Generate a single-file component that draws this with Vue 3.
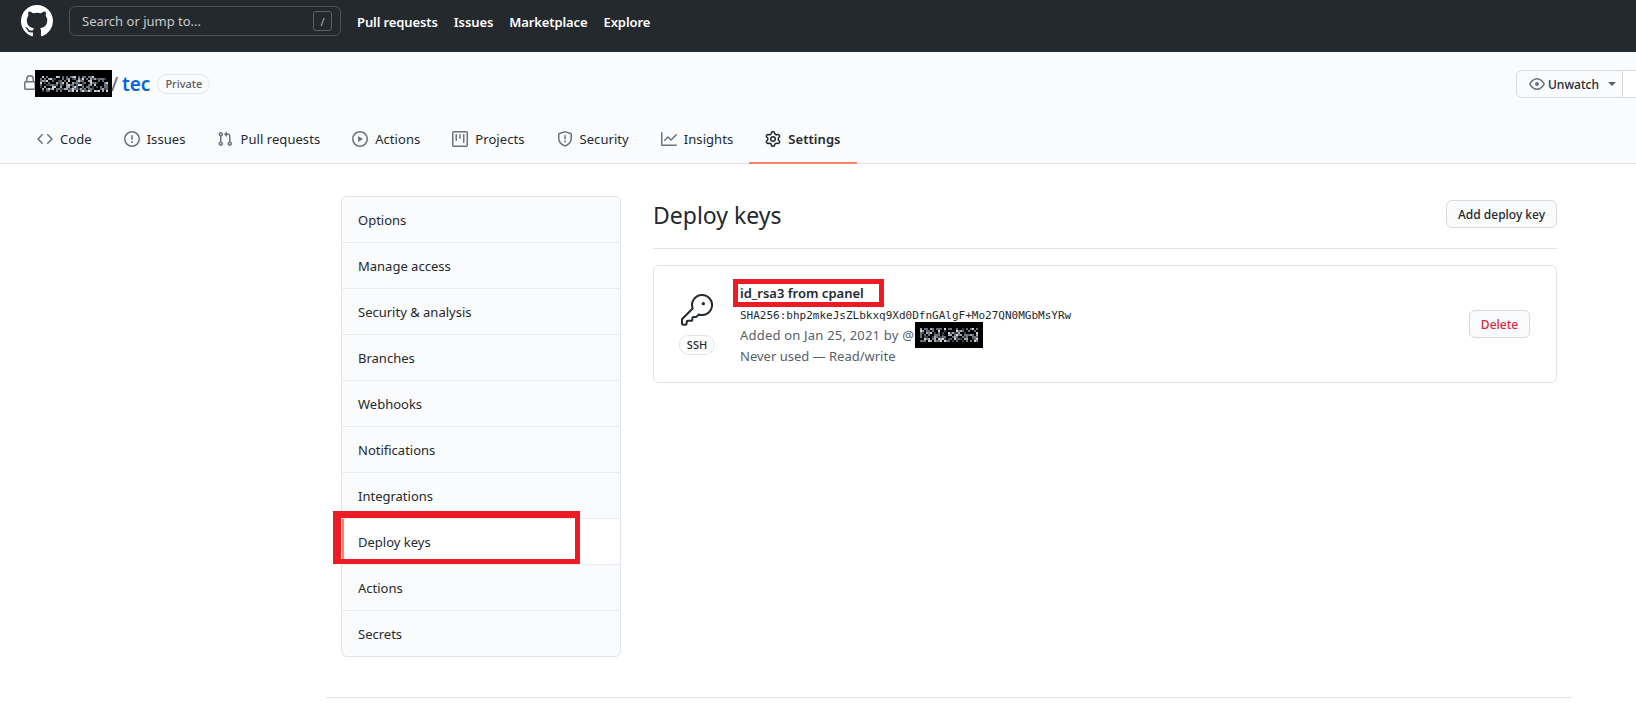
<template>
  <div class="page">
    <header class="topbar">
      <svg class="logo" viewBox="0 0 16 16" width="32" height="32"><path fill="#fff" :d="icons.mark" /></svg>
      <div class="search">
        <span>Search or jump to...</span>
        <kbd>/</kbd>
      </div>
      <nav class="topnav">
        <a v-for="link in topLinks" :key="link">{{ link }}</a>
      </nav>
    </header>

    <section class="repohead">
      <div class="repotitle">
        <svg class="lock" viewBox="0 0 16 16" width="16" height="16"><path fill-rule="evenodd" :d="icons.lock" /></svg>
        <span class="owner"></span>
        <span class="slash">/</span>
        <a class="reponame">tec</a>
        <span class="label">Private</span>
        <div class="watch">
          <button class="watch-btn">
            <svg viewBox="0 0 16 16" width="16" height="16"><path fill-rule="evenodd" :d="icons.eye" /></svg>
            Unwatch
            <i class="caret"></i>
          </button>
          <button class="watch-next"></button>
        </div>
      </div>
      <nav class="tabs">
        <a v-for="tab in tabs" :key="tab.name" class="tab" :class="{ selected: tab.name === 'Settings' }">
          <svg viewBox="0 0 16 16" width="16" height="16"><path fill-rule="evenodd" :d="tab.icon" /></svg>
          {{ tab.name }}
        </a>
      </nav>
    </section>

    <div class="content">
      <aside class="menu">
        <a v-for="item in menu" :key="item" class="menu-item" :class="{ current: item === 'Deploy keys' }">{{ item }}</a>
      </aside>
      <main class="main">
        <div class="subhead">
          <h2>Deploy keys</h2>
          <button class="btn">Add deploy key</button>
        </div>
        <div class="keybox">
          <div class="keyicon">
            <svg viewBox="0 0 24 24" width="32" height="32" fill="none" stroke="#24292e" stroke-width="1.5" stroke-linejoin="round">
              <path d="M15.75.75a7.5 7.5 0 1 1-2.4 14.6l-1.6 1.6a1 1 0 0 1-.7.3H9.5a1 1 0 0 0-1 1v1.2a.7.7 0 0 1-.7.7H5.25a1 1 0 0 0-1 1v1a1 1 0 0 1-1 1H1.75a1 1 0 0 1-1-1v-2.9a1 1 0 0 1 .3-.7l7.7-7.7A7.5 7.5 0 0 1 15.75.75z" />
              <circle cx="16.75" cy="7.25" r="1.25" fill="#24292e" stroke="none" />
            </svg>
            <span class="label ssh">SSH</span>
          </div>
          <div class="keyinfo">
            <strong>id_rsa3 from cpanel</strong>
            <code>SHA256:bhp2mkeJsZLbkxq9Xd0DfnGAlgF+Mo27QN0MGbMsYRw</code>
            <span class="added">Added on Jan 25, 2021 by @</span>
            <span>Never used — Read/write</span>
          </div>
          <button class="btn danger">Delete</button>
        </div>
      </main>
    </div>
    <div class="footer-line"></div>

    <!-- blacked out usernames and the red marks drawn over the screenshot -->
    <svg v-for="box in redactions" :key="box.cls" class="redact" :class="box.cls" :viewBox="`0 0 ${box.w} ${box.h}`">
      <rect :width="box.w" :height="box.h" fill="#000" />
      <g class="speckle">
        <rect v-for="(n, i) in noise(box)" :key="i" :x="n.x" :y="n.y" width="2" height="2" :fill="n.c" />
      </g>
    </svg>
    <div class="mark mark-menu"></div>
    <div class="mark mark-key"></div>
  </div>
</template>

<script setup>
const icons = {
  mark: 'M8 0C3.58 0 0 3.58 0 8c0 3.54 2.29 6.53 5.47 7.59.4.07.55-.17.55-.38 0-.19-.01-.82-.01-1.49-2.01.37-2.53-.49-2.69-.94-.09-.23-.48-.94-.82-1.13-.28-.15-.68-.52-.01-.53.63-.01 1.08.58 1.23.82.72 1.21 1.87.87 2.33.66.07-.52.28-.87.51-1.07-1.78-.2-3.64-.89-3.64-3.95 0-.87.31-1.59.82-2.15-.08-.2-.36-1.02.08-2.12 0 0 .67-.21 2.2.82.64-.18 1.32-.27 2-.27.68 0 1.36.09 2 .27 1.53-1.04 2.2-.82 2.2-.82.44 1.1.16 1.92.08 2.12.51.56.82 1.27.82 2.15 0 3.07-1.87 3.75-3.65 3.95.29.25.54.73.54 1.48 0 1.07-.01 1.93-.01 2.2 0 .21.15.46.55.38A8.013 8.013 0 0016 8c0-4.42-3.58-8-8-8z',
  lock: 'M4 4v2h-.25A1.75 1.75 0 002 7.75v5.5c0 .966.784 1.75 1.75 1.75h8.5A1.75 1.75 0 0014 13.25v-5.5A1.75 1.75 0 0012.25 6H12V4a4 4 0 10-8 0zm6.5 2V4a2.5 2.5 0 00-5 0v2h5zM12 7.5h.25a.25.25 0 01.25.25v5.5a.25.25 0 01-.25.25h-8.5a.25.25 0 01-.25-.25v-5.5a.25.25 0 01.25-.25H12z',
  eye: 'M1.679 7.932c.412-.621 1.242-1.75 2.366-2.717C5.175 4.242 6.527 3.5 8 3.5c1.473 0 2.824.742 3.955 1.715 1.124.967 1.954 2.096 2.366 2.717a.119.119 0 010 .136c-.412.621-1.242 1.75-2.366 2.717C10.825 11.758 9.473 12.5 8 12.5c-1.473 0-2.824-.742-3.955-1.715C2.92 9.818 2.09 8.69 1.679 8.068a.119.119 0 010-.136zM8 2c-1.981 0-3.67.992-4.933 2.078C1.797 5.169.88 6.423.43 7.1a1.619 1.619 0 000 1.798c.45.678 1.367 1.932 2.637 3.024C4.329 13.008 6.019 14 8 14c1.981 0 3.67-.992 4.933-2.078 1.27-1.091 2.187-2.345 2.637-3.023a1.619 1.619 0 000-1.798c-.45-.678-1.367-1.932-2.637-3.023C11.671 2.992 9.981 2 8 2zm0 8a2 2 0 100-4 2 2 0 000 4z'
}

const topLinks = ['Pull requests', 'Issues', 'Marketplace', 'Explore']

const tabs = [
  { name: 'Code', icon: 'M4.72 3.22a.75.75 0 011.06 1.06L2.06 8l3.72 3.72a.75.75 0 11-1.06 1.06L.47 8.53a.75.75 0 010-1.06l4.25-4.25zm6.56 0a.75.75 0 10-1.06 1.06L13.94 8l-3.72 3.72a.75.75 0 101.06 1.06l4.25-4.25a.75.75 0 000-1.06l-4.25-4.25z' },
  { name: 'Issues', icon: 'M8 1.5a6.5 6.5 0 100 13 6.5 6.5 0 000-13zM0 8a8 8 0 1116 0A8 8 0 010 8zm9 3a1 1 0 11-2 0 1 1 0 012 0zm-.25-6.25a.75.75 0 00-1.5 0v3.5a.75.75 0 001.5 0v-3.5z' },
  { name: 'Pull requests', icon: 'M7.177 3.073L9.573.677A.25.25 0 0110 .854v4.792a.25.25 0 01-.427.177L7.177 3.427a.25.25 0 010-.354zM3.75 2.5a.75.75 0 100 1.5.75.75 0 000-1.5zm-2.25.75a2.25 2.25 0 113 2.122v5.256a2.251 2.251 0 11-1.5 0V5.372A2.25 2.25 0 011.5 3.25zM11 2.5h-1V4h1a1 1 0 011 1v5.628a2.251 2.251 0 101.5 0V5A2.5 2.5 0 0011 2.5zm1 10.25a.75.75 0 111.5 0 .75.75 0 01-1.5 0zM3.75 12a.75.75 0 100 1.5.75.75 0 000-1.5z' },
  { name: 'Actions', icon: 'M1.5 8a6.5 6.5 0 1113 0 6.5 6.5 0 01-13 0zM8 0a8 8 0 100 16A8 8 0 008 0zM6.379 5.227A.25.25 0 006 5.442v5.117a.25.25 0 00.379.214l4.264-2.559a.25.25 0 000-.428L6.379 5.227z' },
  { name: 'Projects', icon: 'M1.75 0A1.75 1.75 0 000 1.75v12.5C0 15.216.784 16 1.75 16h12.5A1.75 1.75 0 0016 14.25V1.75A1.75 1.75 0 0014.25 0H1.75zM1.5 1.75a.25.25 0 01.25-.25h12.5a.25.25 0 01.25.25v12.5a.25.25 0 01-.25.25H1.75a.25.25 0 01-.25-.25V1.75zM11.75 3a.75.75 0 00-.75.75v7.5a.75.75 0 001.5 0v-7.5a.75.75 0 00-.75-.75zm-8.25.75a.75.75 0 011.5 0v5.5a.75.75 0 01-1.5 0v-5.5zM8 3a.75.75 0 00-.75.75v3.5a.75.75 0 001.5 0v-3.5A.75.75 0 008 3z' },
  { name: 'Security', icon: 'M7.467.133a1.75 1.75 0 011.066 0l5.25 1.68A1.75 1.75 0 0115 3.48V7c0 1.566-.32 3.182-1.303 4.682-.983 1.498-2.585 2.813-5.032 3.855a1.7 1.7 0 01-1.33 0c-2.447-1.042-4.049-2.357-5.032-3.855C1.32 10.182 1 8.566 1 7V3.48a1.75 1.75 0 011.217-1.667l5.25-1.68zm.61 1.429a.25.25 0 00-.153 0l-5.25 1.68a.25.25 0 00-.174.238V7c0 1.358.275 2.666 1.057 3.86.784 1.194 2.121 2.34 4.366 3.297a.2.2 0 00.154 0c2.245-.956 3.582-2.104 4.366-3.298C13.225 9.666 13.5 8.36 13.5 7V3.48a.25.25 0 00-.174-.237l-5.25-1.68zM9 10.5a1 1 0 11-2 0 1 1 0 012 0zm-.25-5.75a.75.75 0 10-1.5 0v3a.75.75 0 001.5 0v-3z' },
  { name: 'Insights', icon: 'M1.5 1.75a.75.75 0 00-1.5 0v12.5c0 .414.336.75.75.75h14.5a.75.75 0 000-1.5H1.5V1.75zm14.28 2.53a.75.75 0 00-1.06-1.06L10 7.94 7.53 5.47a.75.75 0 00-1.06 0L3.22 8.72a.75.75 0 001.06 1.06L7 7.06l2.47 2.47a.75.75 0 001.06 0l5.25-5.25z' },
  { name: 'Settings', icon: 'M7.429 1.525a6.593 6.593 0 011.142 0c.036.003.108.036.137.146l.289 1.105c.147.56.55.967.997 1.189.174.086.341.183.501.29.417.278.97.423 1.53.27l1.102-.303c.11-.03.175.016.195.046.219.31.41.641.573.989.014.031.022.11-.059.19l-.815.806c-.411.406-.562.957-.53 1.456a4.588 4.588 0 010 .582c-.032.499.119 1.05.53 1.456l.815.806c.08.08.073.159.059.19a6.494 6.494 0 01-.573.99c-.02.029-.086.074-.195.045l-1.103-.303c-.559-.153-1.112-.008-1.529.27-.16.107-.327.204-.5.29-.449.222-.851.628-.998 1.189l-.289 1.105c-.029.11-.101.143-.137.146a6.613 6.613 0 01-1.142 0c-.036-.003-.108-.037-.137-.146l-.289-1.105c-.147-.56-.55-.967-.997-1.189a4.502 4.502 0 01-.501-.29c-.417-.278-.97-.423-1.53-.27l-1.102.303c-.11.03-.175-.016-.195-.046a6.492 6.492 0 01-.573-.989c-.014-.031-.022-.11.059-.19l.815-.806c.411-.406.562-.957.53-1.456a4.587 4.587 0 010-.582c.032-.499-.119-1.05-.53-1.456l-.815-.806c-.08-.08-.073-.159-.059-.19a6.44 6.44 0 01.573-.99c.02-.029.086-.075.195-.045l1.103.303c.559.153 1.112.008 1.529-.27.16-.107.327-.204.5-.29.449-.222.851-.628.998-1.189l.289-1.105c.029-.11.101-.143.137-.146zM8 0c-.236 0-.47.01-.701.03-.743.065-1.29.615-1.458 1.261l-.29 1.106c-.017.066-.078.158-.211.224a5.994 5.994 0 00-.668.386c-.123.082-.233.09-.3.071L3.27 2.776c-.644-.177-1.392.02-1.82.63a7.977 7.977 0 00-.704 1.217c-.315.675-.111 1.422.363 1.891l.815.806c.05.048.098.147.088.294a6.084 6.084 0 000 .772c.01.147-.038.246-.088.294l-.815.806c-.474.469-.678 1.216-.363 1.891.2.428.436.835.704 1.218.428.609 1.176.806 1.82.63l1.103-.303c.066-.019.176-.011.299.071.213.143.436.272.668.386.133.066.194.158.212.224l.289 1.106c.169.646.715 1.196 1.458 1.26a8.094 8.094 0 001.402 0c.743-.064 1.29-.614 1.458-1.26l.29-1.106c.017-.066.078-.158.211-.224a5.98 5.98 0 00.668-.386c.123-.082.233-.09.3-.071l1.102.302c.644.177 1.392-.02 1.82-.63.268-.382.505-.789.704-1.217.315-.675.111-1.422-.364-1.891l-.814-.806c-.05-.048-.098-.147-.088-.294a6.1 6.1 0 000-.772c-.01-.147.039-.246.088-.294l.814-.806c.475-.469.679-1.216.364-1.891a7.992 7.992 0 00-.704-1.218c-.428-.609-1.176-.806-1.82-.63l-1.103.303c-.066.019-.176.011-.299-.071a5.991 5.991 0 00-.668-.386c-.133-.066-.194-.158-.212-.224L10.16 1.29C9.99.645 9.444.095 8.701.031A8.094 8.094 0 008 0zm1.5 8a1.5 1.5 0 11-3 0 1.5 1.5 0 013 0zM11 8a3 3 0 11-6 0 3 3 0 016 0z' }
]

const menu = ['Options', 'Manage access', 'Security & analysis', 'Branches', 'Webhooks', 'Notifications', 'Integrations', 'Deploy keys', 'Actions', 'Secrets']

const redactions = [
  { cls: 'redact-owner', w: 77, h: 27, seed: 7 },
  { cls: 'redact-user', w: 68, h: 26, seed: 23 }
]

// speckle that imitates the scrambled username inside the black box
function noise(box) {
  const dots = []
  let s = box.seed
  const colors = ['#6f747b', '#a4a8ad', '#3d4148', '#d0d3d6', '#56677f']
  for (let y = 6; y < box.h - 6; y += 2) {
    for (let x = 5; x < box.w - 5; x += 2) {
      s = (s * 16807) % 2147483647
      if (s % 10 < 6) dots.push({ x, y, c: colors[s % 5] })
    }
  }
  return dots
}
</script>

<style>
html, body {
  margin: 0;
  background: #fff;
  overflow: hidden;
}
</style>

<style scoped>
.page {
  position: relative;
  width: 1636px;
  height: 703px;
  overflow: hidden;
  font-family: "Noto Sans", "Open Sans", sans-serif;
  font-size: 13px;
  color: #24292e;
}
.topbar {
  height: 52px;
  box-sizing: border-box;
  background: #24292e;
  display: flex;
  align-items: flex-start;
  padding: 5px 0 0 21px;
}
.logo {
  display: block;
  margin-right: 16px;
}
.search {
  width: 272px;
  height: 30px;
  margin-top: 1px;
  box-sizing: border-box;
  border: 1px solid #4b5157;
  border-radius: 6px;
  display: flex;
  align-items: center;
  justify-content: space-between;
  padding: 0 8px 0 12px;
  color: #c8cacc;
}
.search kbd {
  width: 19px;
  height: 20px;
  box-sizing: border-box;
  border: 1px solid #5c6166;
  border-radius: 3px;
  font: 11px "Noto Sans", sans-serif;
  color: #b0b3b5;
  display: flex;
  align-items: center;
  justify-content: center;
}
.topnav {
  display: flex;
  gap: 16px;
  margin-left: 16px;
  height: 34px;
  align-items: center;
  letter-spacing: -0.1px;
}
.topnav a {
  color: #fff;
  font-weight: 600;
}
.repohead {
  height: 112px;
  box-sizing: border-box;
  background: #fafbfc;
  border-bottom: 1px solid #e1e4e8;
  padding-top: 18px;
}
.repotitle {
  display: flex;
  align-items: center;
  height: 28px;
  padding-left: 22px;
}
.lock {
  fill: #6a737d;
  margin-bottom: 2px;
}
.owner {
  width: 73px;
}
.slash {
  color: #586069;
  font-size: 19px;
  width: 11px;
}
.reponame {
  color: #0366d6;
  font-size: 19px;
  font-weight: 600;
}
.label {
  border: 1px solid #e1e4e8;
  border-radius: 2em;
  font-size: 11px;
  font-weight: 500;
  line-height: 18px;
  padding: 0 7px;
  color: #586069;
}
.repotitle .label {
  margin-left: 7px;
}
.watch {
  margin-left: auto;
  display: flex;
  height: 28px;
}
.watch-btn {
  width: 107px;
  box-sizing: border-box;
  border: 1px solid #d8dadc;
  border-radius: 6px 0 0 6px;
  background: #fafbfc;
  font: 500 12px "Noto Sans", sans-serif;
  color: #24292e;
  display: flex;
  align-items: center;
  gap: 3px;
  padding: 0 0 0 12px;
}
.watch-btn svg {
  fill: #6a737d;
}
.caret {
  border: 4px solid transparent;
  border-top-color: #586069;
  border-bottom: 0;
  margin-left: 6px;
}
.watch-next {
  width: 13px;
  box-sizing: border-box;
  border: 1px solid #d8dadc;
  border-left: 0;
  border-right: 0;
  background: #fff;
}
.tabs {
  display: flex;
  margin-top: 17px;
  padding-left: 21px;
  letter-spacing: 0.06px;
}
.tab {
  display: flex;
  align-items: center;
  gap: 7px;
  height: 49px;
  box-sizing: border-box;
  padding: 0 16px;
  color: #24292e;
  border-bottom: 2px solid transparent;
}
.tab svg {
  fill: #6a737d;
}
.tab.selected {
  font-weight: 600;
  border-bottom-color: #f9826c;
}
.tab.selected svg {
  fill: #24292e;
}
.content {
  display: flex;
  gap: 32px;
  padding: 32px 0 0 341px;
}
.menu {
  width: 280px;
  box-sizing: border-box;
  background: #fafbfc;
  border: 1px solid #e1e4e8;
  border-radius: 6px;
  display: flex;
  flex-direction: column;
  overflow: hidden;
}
.menu-item {
  height: 46px;
  box-sizing: border-box;
  display: flex;
  align-items: center;
  padding-left: 16px;
  border-bottom: 1px solid #eaecef;
}
.menu-item:last-child {
  height: 45px;
  border-bottom: 0;
}
.menu-item.current {
  background: #fff;
  box-shadow: inset 2px 0 0 #f9826c;
}
.main {
  width: 904px;
}
.subhead {
  display: flex;
  justify-content: space-between;
  align-items: flex-start;
  height: 48px;
  padding-top: 4px;
  border-bottom: 1px solid #e1e4e8;
  margin-bottom: 16px;
}
h2 {
  margin: -1px 0 0;
  font-size: 23px;
  font-weight: 400;
  line-height: 32px;
}
.btn {
  height: 28px;
  width: 111px;
  box-sizing: border-box;
  border: 1px solid #d8dadc;
  border-radius: 6px;
  background: #fafbfc;
  font: 500 12px "Noto Sans", sans-serif;
  color: #24292e;
  padding: 0;
}
.btn.danger {
  width: 61px;
  color: #d4293f;
}
.keybox {
  height: 118px;
  box-sizing: border-box;
  border: 1px solid #e1e4e8;
  border-radius: 6px;
  display: flex;
  align-items: center;
  padding: 0 26px 0 24px;
}
.keyicon {
  width: 38px;
  margin-right: 24px;
  display: flex;
  flex-direction: column;
  align-items: center;
  gap: 9px;
}
.keyicon svg {
  display: block;
}
.label.ssh {
  color: #24292e;
  padding: 0 7px;
}
.keyinfo {
  flex: 1;
  display: flex;
  flex-direction: column;
  line-height: 21px;
  color: #586069;
  margin-top: 1px;
}
.keyinfo strong {
  color: #24292e;
  font-weight: 600;
}
.keyinfo code {
  color: #24292e;
  font: 11px/21px "DejaVu Sans Mono", monospace;
  margin-top: 1px;
}
.keyinfo .added {
  margin-top: -1px;
  letter-spacing: 0.2px;
}
.footer-line {
  position: absolute;
  left: 326px;
  top: 697px;
  width: 1246px;
  height: 1px;
  background: #e1e4e8;
}
.redact {
  position: absolute;
}
.speckle {
  filter: blur(0.6px);
}
.redact-owner {
  left: 35px;
  top: 70px;
  width: 77px;
  height: 27px;
}
.redact-user {
  left: 915px;
  top: 322px;
  width: 68px;
  height: 26px;
}
.mark {
  position: absolute;
  box-sizing: border-box;
  border: 5px solid #ed1c24;
}
.mark-menu {
  left: 333px;
  top: 511px;
  width: 247px;
  height: 53px;
  border-top-width: 7px;
  border-left-width: 8px;
}
.mark-key {
  left: 733px;
  top: 279px;
  width: 151px;
  height: 28px;
}
</style>
